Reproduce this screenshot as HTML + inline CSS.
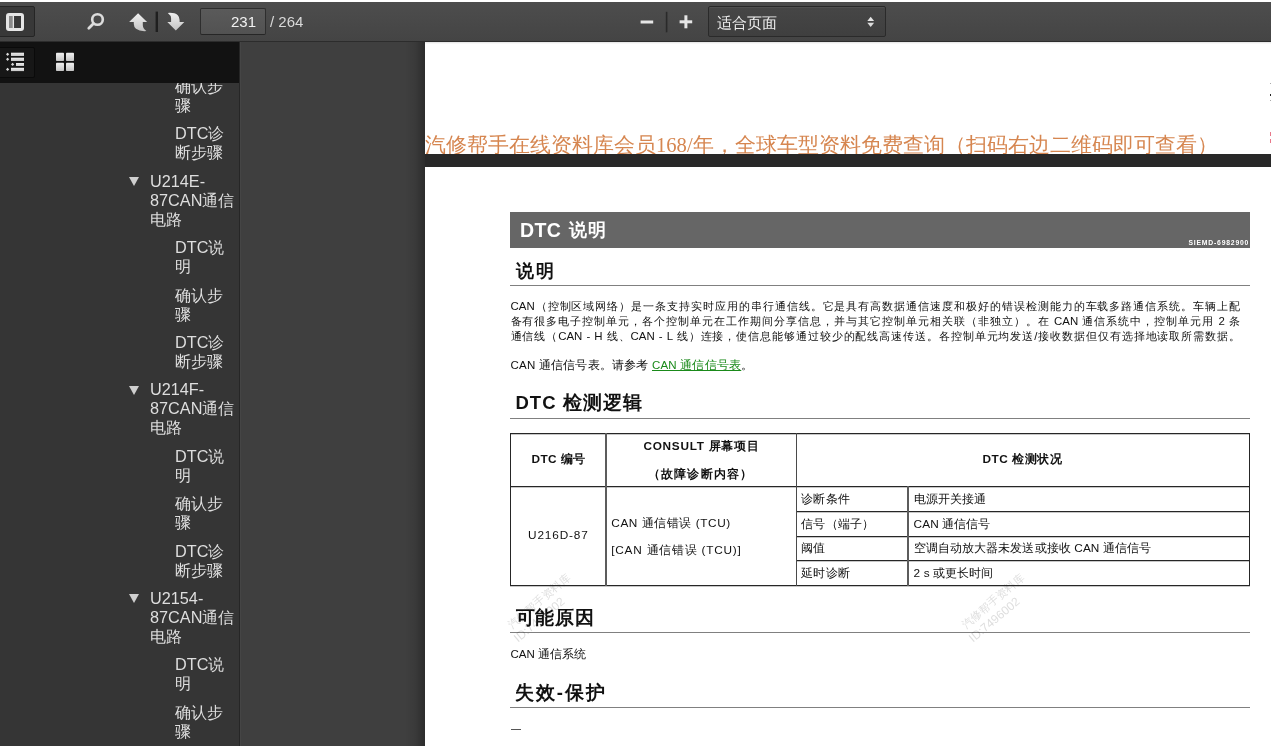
<!DOCTYPE html>
<html><head><meta charset="utf-8">
<style>
*{margin:0;padding:0;box-sizing:border-box}
html,body{width:1271px;height:746px;overflow:hidden;background:#3f3f3f;font-family:"Liberation Sans",sans-serif}
.abs{position:absolute}
#topstrip{left:0;top:0;width:1271px;height:2px;background:#fff}
#toolbar{left:0;top:2px;width:1271px;height:40px;background:linear-gradient(#4d4d4d,#444);box-shadow:inset 0 -1px 0 rgba(255,255,255,.05)}
#tbline{left:0;top:41px;width:1271px;height:1px;background:#2c2c2c}
#sbtool{left:0;top:42px;width:240px;height:41px;background:#121212}
#sbcontent{left:0;top:83px;width:240px;height:663px;background:#353535;overflow:hidden}
#sbedge{left:239px;top:42px;width:1px;height:704px;background:#262626}
#vedge{left:240px;top:42px;width:1px;height:704px;background:#454545}
.btn{border-radius:2px;background:#383838;border:1px solid #252525}
.sbtxt{position:absolute;color:#dedede;font-size:16.25px;line-height:19px;white-space:nowrap}
.tri{position:absolute;width:0;height:0;border-left:5.5px solid transparent;border-right:5.5px solid transparent;border-top:9px solid #cfcfcf}
.page{background:#fff}
.pt{position:absolute;white-space:nowrap;color:#111}
.hl{position:absolute;height:1px;background:#808080}
.tb{position:absolute;background:#1a1a1a}
.para{font-size:11.45px;line-height:14.9px;width:729.5px}
.jl{text-align:justify;text-align-last:justify;white-space:nowrap}
.tbl{font-size:11.8px;line-height:14px;letter-spacing:0.1px}
.b{font-weight:bold}
.wm{position:absolute;white-space:nowrap;color:#dedede;font-size:11px;line-height:13px;transform:rotate(-40deg);transform-origin:0 100%;mix-blend-mode:multiply}
</style></head><body>
<div id="topstrip" class="abs"></div>
<div id="toolbar" class="abs"></div>
<div id="tbline" class="abs"></div>

<!-- sidebar toggle -->
<div class="abs btn" style="left:-2px;top:6px;width:37px;height:31px"></div>
<svg class="abs" style="left:0;top:0" width="300" height="42"><defs><linearGradient id="ig" x1="0" y1="0" x2="0" y2="1"><stop offset="0" stop-color="#f0f0f0"/><stop offset="1" stop-color="#c4c4c4"/></linearGradient></defs>
  <!-- sidebar toggle icon -->
  <rect x="7.5" y="14.5" width="15" height="15" rx="1.5" fill="none" stroke="#e6e6e6" stroke-width="3"/>
  <rect x="9" y="16" width="3.5" height="12" fill="#8a8a8a"/>
  <rect x="12.5" y="16" width="1.7" height="12" fill="#e6e6e6"/>
  <rect x="14.2" y="16" width="6.6" height="12" fill="#3a3a3a"/>
  <!-- search -->
  <circle cx="97.5" cy="19.5" r="5.3" fill="none" stroke="#dcdcdc" stroke-width="2.6"/>
  <line x1="93.5" y1="23.5" x2="88.8" y2="28.2" stroke="#dcdcdc" stroke-width="2.8" stroke-linecap="round"/>
  <!-- up arrow -->
  <path d="M138.1 13.3 L147.1 22 L142.8 22 L142.8 25.3 Q143 28.9 146.4 31.1 Q139.6 31.6 136 28.8 Q133.8 26.8 133.8 24 L133.8 22 L129.1 22 Z" fill="url(#ig)"/>
  <rect x="155.6" y="11.6" width="2.4" height="20.4" fill="#1f1f1f"/>
  <!-- down arrow -->
  <path d="M167.8 12.9 Q174.6 12.4 177.8 15.2 Q179.6 17 179.6 20 L179.6 22 L184.3 22 L175.8 30.4 L167.3 22 L171.1 22 L171.1 18.5 Q171 15.1 167.8 12.9 Z" fill="url(#ig)"/>
</svg>
<!-- page number -->
<div class="abs" style="left:199.5px;top:7.5px;width:66px;height:27px;border-radius:2px;background:linear-gradient(#5a5a5a,#525252);border:1px solid #2e2e2e;border-bottom-color:#262626"></div>
<div class="abs" style="left:200px;top:12.5px;width:56px;text-align:right;color:#f2f2f2;font-size:15px;line-height:18px">231</div>
<div class="abs" style="left:270px;top:12.5px;color:#d9d9d9;font-size:15px;line-height:18px">/ 264</div>

<!-- zoom -->
<svg class="abs" style="left:630px;top:0" width="80" height="42">
  <rect x="10.6" y="20.5" width="12.6" height="3" fill="#e6e6e6"/>
  <rect x="35.8" y="11.8" width="1.6" height="20.5" fill="#2a2a2a"/>
  <rect x="49.6" y="20.3" width="12.6" height="3" fill="#e6e6e6"/>
  <rect x="54.4" y="15.3" width="3" height="13" fill="#e6e6e6"/>
</svg>
<div class="abs" style="left:708px;top:6px;width:177.5px;height:30.5px;border-radius:2px;background:linear-gradient(#464646,#3f3f3f);border:1px solid #2a2a2a;box-shadow:inset 0 1px 0 rgba(255,255,255,.06)"></div>
<div class="abs" style="left:717px;top:12.5px;color:#efefef;font-size:15.2px;line-height:20px">适合页面</div>
<svg class="abs" style="left:860px;top:10px" width="20" height="22">
  <path d="M7.3 10.9 L14.1 10.9 L10.7 6.8 Z" fill="#e4e4e4"/>
  <path d="M7.3 12.8 L14.1 12.8 L10.7 16.9 Z" fill="#dcdcdc"/>
</svg>

<!-- sidebar -->
<div id="sbtool" class="abs"></div>
<div class="abs" style="left:-2px;top:47px;width:37px;height:31px;border-radius:2px;background:#171717;border:1px solid #0a0a0a"></div>
<svg class="abs" style="left:0;top:42px" width="100" height="40">
  <g fill="url(#ig)">
    <path d="M7.6 10.7 l1.6 1.6 l-1.6 1.6 l-1.6 -1.6 z"/>
    <rect x="11" y="10.7" width="13" height="3.3"/>
    <path d="M7.6 15.7 l1.6 1.6 l-1.6 1.6 l-1.6 -1.6 z"/>
    <rect x="11" y="15.7" width="13" height="3.3"/>
    <path d="M12.6 20.8 l1.6 1.6 l-1.6 1.6 l-1.6 -1.6 z"/>
    <rect x="16" y="21" width="8" height="3"/>
    <path d="M7.6 25.8 l1.6 1.6 l-1.6 1.6 l-1.6 -1.6 z"/>
    <rect x="11" y="25.8" width="13" height="3.3"/>
    <rect x="56" y="10.8" width="8" height="8.2" rx="0.8"/>
    <rect x="66" y="10.8" width="8" height="8.2" rx="0.8"/>
    <rect x="56" y="20.8" width="8" height="8.2" rx="0.8"/>
    <rect x="66" y="20.8" width="8" height="8.2" rx="0.8"/>
  </g>
</svg>
<div id="sbcontent" class="abs">
<div class="sbtxt" style="left:175px;top:-6.0px">确认步<br>骤</div>
<div class="sbtxt" style="left:175px;top:41.4px">DTC诊<br>断步骤</div>
<div class="tri" style="left:129px;top:94.1px"></div>
<div class="sbtxt" style="left:150px;top:88.8px">U214E-<br>87CAN通信<br>电路</div>
<div class="sbtxt" style="left:175px;top:155.2px">DTC说<br>明</div>
<div class="sbtxt" style="left:175px;top:202.6px">确认步<br>骤</div>
<div class="sbtxt" style="left:175px;top:250.0px">DTC诊<br>断步骤</div>
<div class="tri" style="left:129px;top:302.7px"></div>
<div class="sbtxt" style="left:150px;top:297.4px">U214F-<br>87CAN通信<br>电路</div>
<div class="sbtxt" style="left:175px;top:363.8px">DTC说<br>明</div>
<div class="sbtxt" style="left:175px;top:411.2px">确认步<br>骤</div>
<div class="sbtxt" style="left:175px;top:458.6px">DTC诊<br>断步骤</div>
<div class="tri" style="left:129px;top:511.3px"></div>
<div class="sbtxt" style="left:150px;top:506.0px">U2154-<br>87CAN通信<br>电路</div>
<div class="sbtxt" style="left:175px;top:572.4px">DTC说<br>明</div>
<div class="sbtxt" style="left:175px;top:619.8px">确认步<br>骤</div>
</div>
<div id="sbedge" class="abs"></div>
<div id="vedge" class="abs"></div>

<!-- pages -->
<!-- page shadow + gap -->
<div class="abs" style="left:405px;top:42px;width:20px;height:704px;background:linear-gradient(90deg,rgba(0,0,0,0),rgba(0,0,0,.08) 50%,rgba(0,0,0,.3))"></div>
<div class="abs" style="left:425px;top:42px;width:846px;height:2px;background:linear-gradient(rgba(0,0,0,.12),rgba(0,0,0,0));z-index:5"></div>
<div class="abs" style="left:425px;top:154px;width:846px;height:12.7px;background:#282828"></div>
<!-- page 230 -->
<div class="abs page" style="left:425px;top:42px;width:846px;height:112px;overflow:hidden">
  <div class="pt" style="left:0;top:90px;font-family:'Liberation Serif',serif;font-size:20.6px;line-height:26px;color:#d68650">汽修帮手在线资料库会员168/年，全球车型资料免费查询（扫码右边二维码即可查看）</div>
</div>
<!-- page 231 -->
<div class="abs page" style="left:425px;top:166.7px;width:846px;height:580px;overflow:hidden">
  <div class="abs" style="left:85px;top:45.1px;width:740px;height:36.2px;background:#666"></div>
  <div class="pt" style="left:95px;top:51px;color:#fff;font-weight:bold;font-size:19.5px;line-height:24px;letter-spacing:0.4px">DTC</div>
  <div class="pt" style="left:143.5px;top:52px;color:#fff;font-weight:bold;font-size:17.5px;line-height:22px;letter-spacing:1.4px">说明</div>
  <div class="pt" style="left:763.5px;top:72px;color:#fff;font-weight:bold;font-size:6.8px;line-height:8px;letter-spacing:0.8px">SIEMD-6982900</div>
  <div class="pt" style="left:90.5px;top:93px;font-weight:bold;font-size:17.8px;line-height:22px;letter-spacing:2.4px">说明</div>
  <div class="hl" style="left:85px;top:118.2px;width:740px"></div>
  <div class="pt para" style="left:85.5px;top:132.5px">
    <div class="jl">CAN（控制区域网络）是一条支持实时应用的串行通信线。它是具有高数据通信速度和极好的错误检测能力的车载多路通信系统。车辆上配</div>
    <div class="jl">备有很多电子控制单元，各个控制单元在工作期间分享信息，并与其它控制单元相关联（非独立）。在 CAN 通信系统中，控制单元用 2 条</div>
    <div class="jl">通信线（CAN - H 线、CAN - L 线）连接，使信息能够通过较少的配线高速传送。各控制单元均发送/接收数据但仅有选择地读取所需数据。</div>
  </div>
  <div class="pt" style="left:85.5px;top:191px;font-size:11.5px;line-height:14.5px;letter-spacing:0.2px">CAN 通信信号表。请参考 <span style="color:#1a8a1a;text-decoration:underline">CAN 通信信号表</span>。</div>
  <div class="pt" style="left:90.5px;top:224px;font-weight:bold;font-size:18.5px;line-height:24px;letter-spacing:1px">DTC 检测逻辑</div>
  <div class="hl" style="left:85px;top:251px;width:740px"></div>
  <!-- table -->
  <div class="pt tbl b" style="left:106.5px;top:285.5px;letter-spacing:0.4px">DTC 编号</div>
  <div class="pt tbl b" style="left:218.5px;top:272.5px;letter-spacing:0.71px">CONSULT 屏幕项目</div>
  <div class="pt tbl b" style="left:223px;top:300px;letter-spacing:1.16px">（故障诊断内容）</div>
  <div class="pt tbl b" style="left:557.5px;top:285.5px;letter-spacing:0.54px">DTC 检测状况</div>
  <div class="pt tbl" style="left:103px;top:361.2px;letter-spacing:0.86px">U216D-87</div>
  <div class="pt tbl" style="left:186.3px;top:349.5px;letter-spacing:0.56px">CAN 通信错误 (TCU)</div>
  <div class="pt tbl" style="left:186.3px;top:376.8px;letter-spacing:0.75px">[CAN 通信错误 (TCU)]</div>
  <div class="pt tbl" style="left:376.4px;top:325.5px">诊断条件</div>
  <div class="pt tbl" style="left:376.4px;top:350.5px">信号（端子）</div>
  <div class="pt tbl" style="left:376.4px;top:374.5px">阈值</div>
  <div class="pt tbl" style="left:376.4px;top:399.5px">延时诊断</div>
  <div class="pt tbl" style="left:488.6px;top:325.5px">电源开关接通</div>
  <div class="pt tbl" style="left:488.6px;top:350.5px">CAN 通信信号</div>
  <div class="pt tbl" style="left:488.6px;top:374.5px">空调自动放大器未发送或接收 CAN 通信信号</div>
  <div class="pt tbl" style="left:488.6px;top:399.5px">2 s 或更长时间</div>

  <div class="pt" style="left:90.5px;top:439px;font-weight:bold;font-size:18.5px;line-height:24px;letter-spacing:0.8px">可能原因</div>
  <div class="hl" style="left:85px;top:465.5px;width:740px"></div>
  <div class="pt" style="left:85.5px;top:480px;font-size:11.5px;line-height:14.5px">CAN 通信系统</div>
  <div class="pt" style="left:90px;top:514px;font-weight:bold;font-size:18.5px;line-height:24px;letter-spacing:1.9px">失效-保护</div>
  <div class="hl" style="left:85px;top:540.8px;width:740px"></div>
  <div class="abs" style="left:86px;top:562.5px;width:10px;height:1px;background:#555"></div>

</div>
<!-- watermarks -->
<div class="wm" style="left:513.5px;top:617.5px">汽修帮手资料库</div>
<div class="wm" style="left:520.0px;top:632.0px;font-size:12px">ID:7496002</div>
<div class="wm" style="left:968.1px;top:617.5px">汽修帮手资料库</div>
<div class="wm" style="left:974.6px;top:632.0px;font-size:12px">ID:7496002</div>
<!-- table lines -->
<div class="abs" style="left:510px;top:433px;width:740px;height:1px;background:#262626"></div>
<div class="abs" style="left:510px;top:434px;width:740px;height:1px;background:rgba(0,0,0,.22)"></div>
<div class="abs" style="left:510px;top:486px;width:740px;height:1px;background:#262626"></div>
<div class="abs" style="left:510px;top:487px;width:740px;height:1px;background:rgba(0,0,0,.22)"></div>
<div class="abs" style="left:796px;top:511px;width:454px;height:1px;background:#262626"></div>
<div class="abs" style="left:796px;top:512px;width:454px;height:1px;background:rgba(0,0,0,.22)"></div>
<div class="abs" style="left:796px;top:536px;width:454px;height:1px;background:#262626"></div>
<div class="abs" style="left:796px;top:537px;width:454px;height:1px;background:rgba(0,0,0,.22)"></div>
<div class="abs" style="left:796px;top:560px;width:454px;height:1px;background:#262626"></div>
<div class="abs" style="left:796px;top:561px;width:454px;height:1px;background:rgba(0,0,0,.22)"></div>
<div class="abs" style="left:510px;top:585px;width:740px;height:1px;background:#262626"></div>
<div class="abs" style="left:510px;top:586px;width:740px;height:1px;background:rgba(0,0,0,.22)"></div>
<div class="abs" style="left:510px;top:433px;width:1px;height:153px;background:#262626"></div>
<div class="abs" style="left:605px;top:433px;width:2px;height:153px;background:#5c5c5c"></div>
<div class="abs" style="left:795.5px;top:433px;width:1.5px;height:153px;background:#4a4a4a"></div>
<div class="abs" style="left:907px;top:486px;width:2px;height:100px;background:#5c5c5c"></div>
<div class="abs" style="left:1249px;top:433px;width:1px;height:153px;background:#262626"></div>
<!-- right-edge marks of page 230 -->
<div class="abs" style="left:1270px;top:83px;width:1px;height:1px;background:#aaa"></div>
<div class="abs" style="left:1270px;top:94px;width:1px;height:2px;background:#222"></div>
<div class="abs" style="left:1270px;top:100px;width:1px;height:1px;background:#aaa"></div>
<div class="abs" style="left:1270px;top:132px;width:1px;height:4px;background:#e8788a"></div>
<div class="abs" style="left:1270px;top:139px;width:1px;height:4px;background:#e8788a"></div>


</body></html>
